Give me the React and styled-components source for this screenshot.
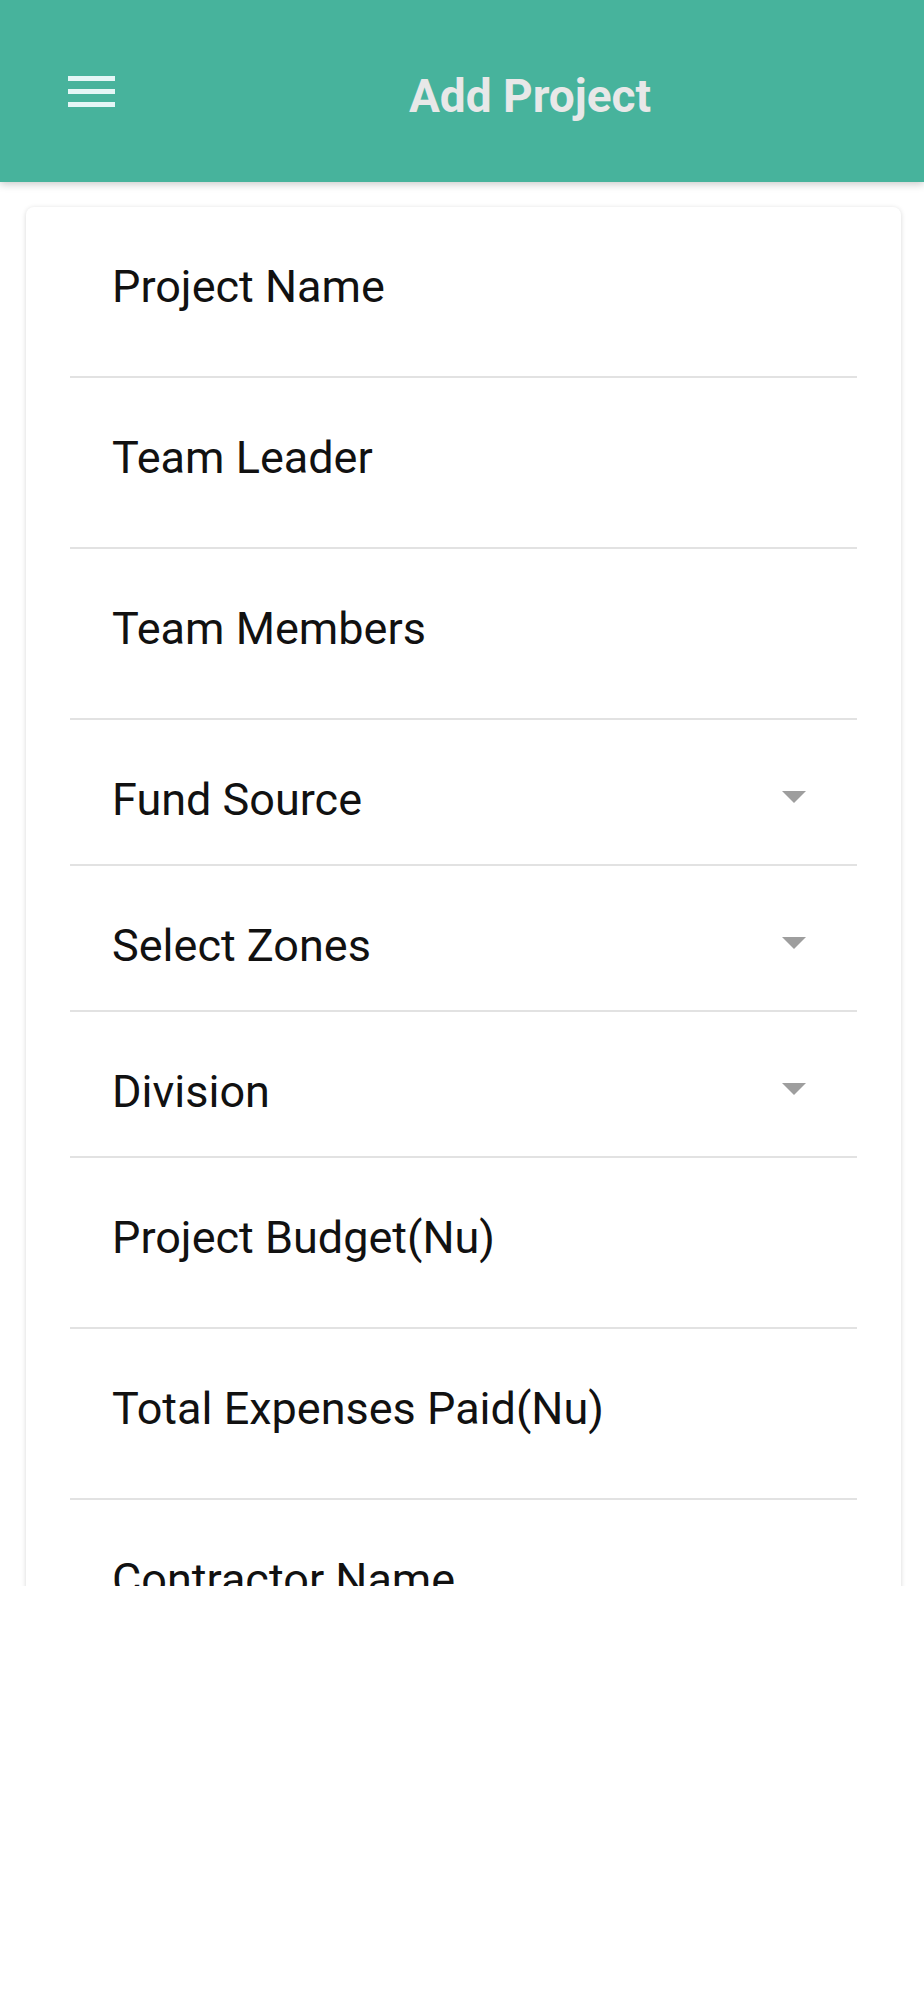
import React from "react";
import styled, { createGlobalStyle } from "styled-components";

const GlobalStyle = createGlobalStyle`
  html, body {
    margin: 0;
    padding: 0;
    background: #ffffff;
  }
  * {
    box-sizing: border-box;
  }
`;

const Screen = styled.div`
  height: 1586px;
  overflow: hidden;
  display: flex;
  flex-direction: column;
  background: #ffffff;
  font-family: Roboto, "Noto Sans", sans-serif;
`;

const Header = styled.header`
  position: relative;
  z-index: 1;
  flex: 0 0 182px;
  display: flex;
  align-items: center;
  background: #47b39c;
  box-shadow: 0 2px 8px rgba(0, 0, 0, 0.22);
`;

const MenuButton = styled.button`
  flex: 0 0 136px;
  height: 100%;
  display: flex;
  align-items: center;
  padding: 0 0 0 68px;
  border: none;
  background: transparent;
  cursor: pointer;
`;

const Title = styled.h1`
  flex: 1;
  margin: 0;
  padding-top: 10px;
  text-align: center;
  font-size: 46px;
  line-height: 54px;
  font-weight: 700;
  color: #e8e8e8;
`;

const Content = styled.main`
  flex: 1;
  overflow: hidden;
  padding: 25px 23px 0 26px;
`;

const Card = styled.section`
  background: #ffffff;
  border-radius: 8px;
  box-shadow: 0 1px 5px rgba(0, 0, 0, 0.16);
  padding: 0 44px;
`;

const Field = styled.div`
  height: ${(p) => (p.$select ? "146px" : "171px")};
  display: flex;
  align-items: flex-start;
  justify-content: space-between;
  padding: 53px 51px 0 42px;
  border-bottom: 2px solid #e2e2e2;
`;

const Label = styled.span`
  font-size: 45px;
  line-height: 53px;
  font-weight: 400;
  color: #111111;
`;

const Caret = styled.span`
  margin-top: 18px;
  width: 0;
  height: 0;
  border-left: 12.5px solid transparent;
  border-right: 12.5px solid transparent;
  border-top: 12px solid #9e9e9e;
`;

const MenuIcon = () => (
  <svg width="47" height="31" viewBox="0 0 47 31">
    <rect x="0" y="0" width="47" height="5" fill="#e4f6f6" />
    <rect x="0" y="13" width="47" height="5" fill="#e4f6f6" />
    <rect x="0" y="26" width="47" height="5" fill="#e4f6f6" />
  </svg>
);

const fields = [
  { label: "Project Name" },
  { label: "Team Leader" },
  { label: "Team Members" },
  { label: "Fund Source", select: true },
  { label: "Select Zones", select: true },
  { label: "Division", select: true },
  { label: "Project Budget(Nu)" },
  { label: "Total Expenses Paid(Nu)" },
  { label: "Contractor Name" },
];

const App = () => {
  return (
    <>
      <GlobalStyle />
      <Screen>
        <Header>
          <MenuButton aria-label="menu">
            <MenuIcon />
          </MenuButton>
          <Title>Add Project</Title>
        </Header>
        <Content>
          <Card>
            {fields.map((f) => (
              <Field key={f.label} $select={f.select}>
                <Label>{f.label}</Label>
                {f.select && <Caret />}
              </Field>
            ))}
          </Card>
        </Content>
      </Screen>
    </>
  );
};

export default App;
